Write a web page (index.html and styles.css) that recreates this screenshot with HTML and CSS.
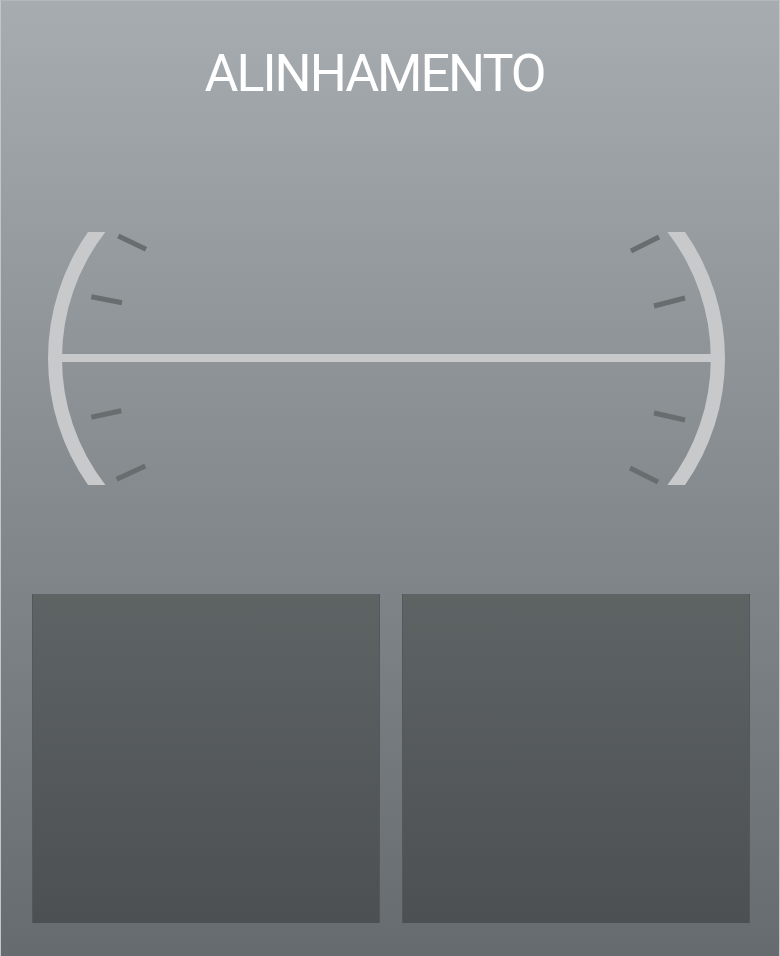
FILE: index.html
```html
<!DOCTYPE html>
<html lang="pt">
<head>
<meta charset="utf-8">
<title>Alinhamento</title>
<link rel="stylesheet" href="styles.css">
</head>
<body>
<div class="screen">
  <h1 class="title">ALINHAMENTO</h1>
  <svg class="gauge" viewBox="0 220 780 280" width="780" height="280" aria-hidden="true">
    <rect class="axis" x="58" y="354" width="658" height="8"/>
    <path class="arc" d="M88,232 A220,220 0 0 0 88,485 L105.4,485 A206,206 0 0 1 105.4,232 Z"/>
    <path class="arc" d="M685,232 A220,220 0 0 1 685,485 L667.4,485 A206,206 0 0 0 667.4,232 Z"/>
    <g class="ticks">
      <line x1="118.3" y1="236" x2="146" y2="249.3"/>
      <line x1="91.3" y1="296.7" x2="122" y2="302.7"/>
      <line x1="91.3" y1="417.3" x2="121.3" y2="410.7"/>
      <line x1="116.7" y1="479.3" x2="145.3" y2="466"/>
      <line x1="631" y1="251" x2="659" y2="237"/>
      <line x1="654" y1="306" x2="685" y2="298"/>
      <line x1="654" y1="413" x2="685" y2="420"/>
      <line x1="630" y1="468" x2="658" y2="482"/>
    </g>
  </svg>
  <div class="panels">
    <div class="panel"></div>
    <div class="panel"></div>
  </div>
</div>
</body>
</html>
```
FILE: styles.css
```css
html, body {
  margin: 0;
  padding: 0;
}
body {
  background: #666b6f;
}
.screen {
  box-sizing: border-box;
  width: 780px;
  height: 956px;
  border-left: 1px solid #c3c6c8;
  border-right: 1px solid #c3c6c8;
  border-top: 1px solid #b3b8ba;
  background: linear-gradient(to bottom, #a6acaf 0%, #666b6f 100%);
  overflow: hidden;
}
.title {
  margin: 0;
  padding: 47px 31px 0 0;
  height: 52px;
  font-family: Roboto, "Liberation Sans", sans-serif;
  font-weight: 400;
  font-size: 52px;
  line-height: 52px;
  letter-spacing: -2px;
  color: #ffffff;
  text-align: center;
}
.gauge {
  display: block;
  margin-top: 120px;
  margin-left: -1px;
}
.axis {
  fill: #c8c9ca;
}
.arc {
  fill: #c8c9ca;
}
.ticks line {
  stroke: #686d70;
  stroke-width: 5;
  stroke-linecap: butt;
}
.panels {
  display: grid;
  grid-template-columns: 1fr 1fr;
  gap: 22px;
  margin-top: 94px;
  padding: 0 29px 0 31px;
}
.panel {
  height: 329px;
  background: linear-gradient(to bottom, #5e6364 0%, #4c5053 100%);
  box-shadow: inset 1px 0 0 #53585c, inset -1px 0 0 #53585c;
}
```
